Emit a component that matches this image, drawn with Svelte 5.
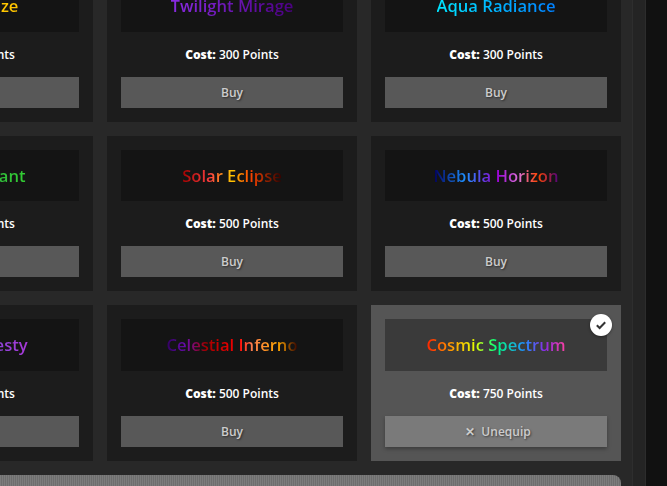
<script>
  const rows = [
    [
      { name: "Amber Blaze", cost: 300, fx: "gold" },
      { name: "Twilight Mirage", cost: 300, fx: "twilight" },
      { name: "Aqua Radiance", cost: 300, fx: "aqua" }
    ],
    [
      { name: "Green Radiant", cost: 500, fx: "emerald" },
      { name: "Solar Eclipse", cost: 500, fx: "solar" },
      { name: "Nebula Horizon", cost: 500, fx: "nebula" }
    ],
    [
      { name: "Purple Majesty", cost: 500, fx: "royal" },
      { name: "Celestial Inferno", cost: 500, fx: "inferno" },
      { name: "Cosmic Spectrum", cost: 750, fx: "cosmic", equipped: true }
    ]
  ];
  const items = rows.flat();
</script>

<div class="page">
  <main class="shop">
    <div class="grid">
      {#each items as item}
        <article class="card" class:equipped={item.equipped}>
          {#if item.equipped}
            <span class="badge">
              <svg viewBox="0 0 12 12" width="12" height="12">
                <path d="M1.8 6.3 4.6 9 10.2 3.2" fill="none" stroke="#333" stroke-width="2" />
              </svg>
            </span>
          {/if}
          <div class="preview"><span class="name {item.fx}">{item.name}</span></div>
          <p class="cost"><b>Cost:</b> {item.cost} Points</p>
          <button type="button">
            {#if item.equipped}<span class="x">✕</span> Unequip{:else}Buy{/if}
          </button>
        </article>
      {/each}
    </div>
    <div class="bar"></div>
  </main>
  <div class="track"></div>
  <div class="outside"></div>
</div>

<style>
  :global(body) {
    background: #111;
  }

  .page {
    display: flex;
    height: 486px;
    width: 667px;
    overflow: hidden;
    font-family: "Open Sans", "Noto Sans", sans-serif;
  }

  .shop {
    width: 632px;
    flex: none;
    background: #282828;
    overflow: hidden;
  }

  .grid {
    display: grid;
    grid-template-columns: repeat(3, 250px);
    gap: 14px;
    margin: -34px 0 0 -157px;
  }

  .card {
    position: relative;
    height: 155.5px;
    box-sizing: border-box;
    padding: 14px;
    background: #1c1c1c;
    text-align: center;
  }

  .card.equipped {
    background: #555;
  }

  .preview {
    height: 51.5px;
    display: flex;
    align-items: center;
    justify-content: center;
    background: #141414;
    font-size: 16.6px;
    font-weight: 600;
  }

  .equipped .preview {
    background: #3a3a3a;
  }

  .name {
    background-clip: text;
    -webkit-background-clip: text;
    color: transparent;
  }

  .gold { background-image: linear-gradient(90deg, #ffd700, #ffc400); }
  .twilight { background-image: linear-gradient(90deg, #8a2be2, #4b0082); }
  .aqua { background-image: linear-gradient(90deg, #00e5ff, #0080ff); }
  .emerald { background-image: linear-gradient(90deg, #2e8b57, #32cd32); }
  .royal { background-image: linear-gradient(90deg, #4169e1, #a838d8); }
  .solar { background-image: linear-gradient(90deg, #a00000, #ff4040 28%, #ffc800 50%, #ff4500 68%, #300000); }
  .nebula { background-image: linear-gradient(90deg, #000060, #1e90ff 25%, #9400d3 50%, #da70d6 68%, #ff4500 83%, #4b0082); }
  .inferno { background-image: linear-gradient(90deg, #300060, #6a0dad 15%, #a00000 30%, #ff0000 55%, #ff7f50 65%, #ffa500 85%, #300000); }
  .cosmic { background-image: linear-gradient(90deg, #ff2000, #ffa500 20%, #e8ff00 35%, #00ff7f 50%, #1e90ff 70%, #8a2be2 85%, #ff40a0); }

  .cost {
    margin: 0;
    height: 45.2px;
    line-height: 45px;
    font-size: 12px;
    font-weight: 600;
    color: #fff;
  }

  .cost b {
    font-weight: 800;
  }

  button {
    display: block;
    width: 100%;
    height: 31px;
    padding: 0;
    border: 0;
    background: #585858;
    color: #ccc;
    font: 600 12px "Open Sans", "Noto Sans", sans-serif;
    text-shadow: 1px 1px 2px rgba(0, 0, 0, 0.5);
  }

  .equipped button {
    padding-left: 4px;
    background: #7a7a7a;
    box-shadow: 0 2px 4px rgba(0, 0, 0, 0.3);
  }

  .x {
    margin-right: 3px;
  }

  .badge {
    position: absolute;
    top: 9px;
    right: 9px;
    width: 22px;
    height: 22px;
    border-radius: 50%;
    background: #fff;
    display: flex;
    align-items: center;
    justify-content: center;
    box-shadow: 0 1px 3px rgba(0, 0, 0, 0.4);
  }

  .bar {
    height: 40px;
    width: 621px;
    margin-top: 14px;
    border-radius: 0 8px 0 0;
    background: repeating-linear-gradient(90deg, #7c7c7c 0 1px, #6e6e6e 1px 2px);
  }

  .track {
    width: 14px;
    flex: none;
    background: #242424;
    border-left: 1px solid #2e2e2e;
    border-right: 1px solid #2c2c2c;
    box-sizing: border-box;
  }

  .outside {
    flex: 1;
    background: #111;
  }
</style>
